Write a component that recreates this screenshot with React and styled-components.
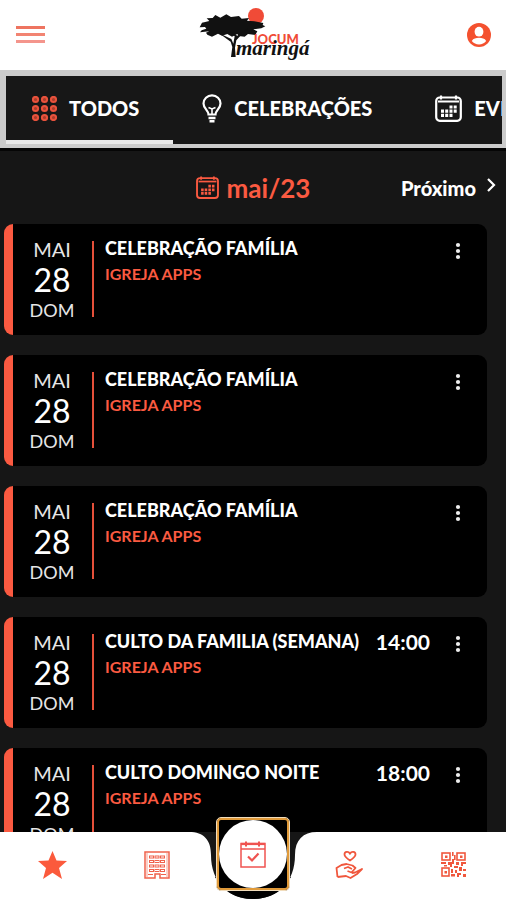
import React from 'react';
import styled, { createGlobalStyle } from 'styled-components';

const ACCENT = '#fb5a41';

const GlobalStyle = createGlobalStyle`
  * { box-sizing: border-box; }
  body { margin: 0; background: #161616; font-family: 'Lato', 'Open Sans', sans-serif; }
  button { margin: 0; padding: 0; border: 0; background: none; font: inherit; color: inherit; cursor: pointer; }
  svg { display: block; }
`;

const Screen = styled.div`
  display: flex;
  flex-direction: column;
  height: 100vh;
  overflow: hidden;
  background: #161616;
  color: #fff;
`;

const Header = styled.header`
  display: flex;
  align-items: center;
  justify-content: space-between;
  flex: none;
  height: 70px;
  padding: 0 15px;
  background: #fff;
  color: ${ACCENT};
`;

const TabBar = styled.div`
  display: flex;
  flex: none;
  gap: 3px;
  height: 78px;
  overflow: hidden;
  border: solid #cbcbcb;
  border-width: 6px 4px 4px 6px;
  background: #171717;
`;

const Tab = styled.button`
  display: flex;
  flex: none;
  align-items: center;
  gap: 12px;
  padding: 0 34px 0 26px;
  border-bottom: 4px solid ${(p) => (p.$active ? '#e8e8e8' : '#171717')};
  font-size: 20px;
  line-height: 24px;
  font-weight: 900;
`;

const TabIcon = styled.span`
  color: ${(p) => (p.$active ? '#e8523c' : '#fff')};
`;

const MonthBar = styled.div`
  display: grid;
  grid-template-columns: 1fr auto 1fr;
  align-items: center;
  flex: none;
  height: 76px;
  padding: 0 10px;
  border-top: 3px solid #050505;
`;

const Month = styled.h1`
  display: flex;
  align-items: center;
  gap: 8px;
  grid-column: 2;
  margin: 0;
  color: ${ACCENT};
  font-size: 26px;
  line-height: 32px;
  font-weight: 700;
`;

const NextButton = styled.button`
  display: flex;
  align-items: center;
  justify-self: end;
  gap: 10px;
  font-size: 20px;
  line-height: 24px;
  font-weight: 900;
`;

const EventList = styled.main`
  display: flex;
  flex: 1;
  flex-direction: column;
  gap: 20px;
  min-height: 0;
  overflow: hidden;
  padding: 0 19px 0 4px;
`;

const Card = styled.article`
  display: flex;
  flex: none;
  height: 111px;
  padding: 12px 24px 18px 9px;
  border-left: 9px solid ${ACCENT};
  border-radius: 9px;
  background: #000;
`;

const DateBox = styled.time`
  display: flex;
  flex: none;
  flex-direction: column;
  align-items: center;
  width: 60px;
  font-size: 20px;
  line-height: 26px;
  color: #e6e6e6;
`;

const Day = styled.strong`
  font-size: 32px;
  line-height: 36px;
  font-weight: 400;
  color: #fff;
`;

const Weekday = styled.span`
  font-size: 18px;
  line-height: 24px;
`;

const Divider = styled.span`
  flex: none;
  width: 2px;
  height: 76px;
  margin: 5px 11px 0 10px;
  background: #e5503a;
`;

const Details = styled.div`
  flex: 1;
  min-width: 0;
`;

const Title = styled.h2`
  margin: 0 0 2px;
  font-size: 18px;
  line-height: 24px;
  font-weight: 900;
  white-space: nowrap;
`;

const Place = styled.p`
  margin: 0;
  color: ${ACCENT};
  font-size: 16px;
  line-height: 24px;
  font-weight: 700;
`;

const Hour = styled.span`
  font-size: 21px;
  line-height: 26px;
  font-weight: 700;
`;

const MoreButton = styled.button`
  align-self: flex-start;
  width: 10px;
  margin: 6px 0 0 23px;
`;

const BottomNav = styled.nav`
  position: relative;
  display: flex;
  flex: none;
  height: 68px;
  color: ${ACCENT};
`;

const NavBackground = styled.div`
  position: absolute;
  inset: 0;
  display: grid;
  grid-template-columns: 1fr 128px 1fr;
`;

const Panel = styled.span`
  background: #fff;
`;

const NavItem = styled.button`
  position: relative;
  display: flex;
  flex: 1;
  align-items: center;
  justify-content: center;
  padding-bottom: 3px;
`;

const Agenda = styled.button`
  position: relative;
  flex: none;
  display: flex;
  width: 74px;
  height: 74px;
  margin: -15px 7px 0;
  border: 1px solid #f2ddbc;
  border-radius: 5px;
  background: #000;
  box-shadow: inset 0 0 0 2px #e09a3a;
`;

const Disc = styled.span`
  display: flex;
  align-items: center;
  justify-content: center;
  flex: 1;
  margin: 2px;
  border-radius: 50%;
  background: #fff;
`;

const Burger = () => (
  <svg width="30" height="20" viewBox="0 0 30 20">
    <rect x="1" y="1" width="29" height="3" fill="#ee7460" />
    <rect x="1" y="8" width="29" height="3" fill="#f28472" />
    <rect x="1" y="15" width="29" height="3" fill="#f4958c" />
  </svg>
);

const UserIcon = () => (
  <svg width="24" height="24" viewBox="0 0 24 24">
    <circle cx="12" cy="12" r="12" fill="#f4512f" />
    <ellipse cx="12" cy="8.700" rx="4.400" ry="4.900" fill="#fff" />
    <path d="M4.800 18c1.500-2.600 4.200-3.200 7.200-3.200s5.700.6 7.200 3.200c-1.800 2.300-4.300 3.500-7.200 3.500S6.600 20.300 4.800 18z" fill="#fff" />
  </svg>
);

const Logo = () => (
  <svg width="116" height="62" viewBox="0 0 116 62" role="img" aria-label="JOCUM maringá">
    <circle cx="58" cy="12" r="8" fill="#f04b37" />
    <g transform="translate(-7 -2) scale(.3333)" fill="#111">
      <path d="M33 62l22-5-8-8 18-1 8-9 15 8 18-10 14 8 24-3 8 8 22-2-6 8 22 2 27 5-2 6 8 4-12 6-24 3 12 6-6 11-22-3-10 8-18-2-4-6-16 8-14-8-16 5-12-6-18 9-14-6-4-6 10-4-28 3 5-6 14-5-4-5-16 1z" />
      <path d="M120 165l4-30-5-16-36-26 38 18 6 14 4-22-14-14 22 12 32-22-26 26-9 10-4 22 2 28z" />
    </g>
    <text x="54" y="40" fill="#f04b37" fontFamily="Lato, sans-serif" fontWeight="900" fontSize="13">JOCUM</text>
    <text x="38" y="51" fill="#111" fontFamily="Liberation Serif, serif" fontWeight="700" fontStyle="italic" fontSize="21">maringá</text>
  </svg>
);

const GridIcon = () => (
  <svg width="25" height="25" viewBox="0 0 25 25" fill="#a83d2c" stroke="currentColor" strokeWidth="2">
    {[3.5, 12.5, 21.5].map((y) => [3.5, 12.5, 21.5].map((x) => <circle key={`${x}-${y}`} cx={x} cy={y} r="2.600" />))}
  </svg>
);

const BulbIcon = () => (
  <svg width="20" height="29" viewBox="0 0 20 29" fill="none" stroke="currentColor" strokeWidth="2.200">
    <path d="M6.500 20.500c0-4-5-6-5-11a8.500 8.200 0 0 1 17 0C18.500 14.500 13.500 16.500 13.500 20.500z" />
    <path d="M6.500 13.500l3.500 1.500 3.500-1.500M10 15v6" strokeWidth="1.600" />
    <path d="M6.500 24h7M7.500 27.300h5" strokeWidth="2.600" />
  </svg>
);

const CalendarIcon = ({ size }) => (
  <svg width={size} height={size} viewBox="0 0 27 27" fill="none" stroke="currentColor" strokeWidth="2.200">
    <rect x="1.200" y="2.500" width="24.600" height="23.300" rx="3.500" />
    <path d="M3 6.500h21" strokeWidth="2" />
    <path d="M6 .5v4M21 .5v4" />
    <path d="M14.500 12h3M18.700 12h3M6 16.200h3M10.200 16.200h3M14.500 16.200h3M18.700 16.200h3M6 20.400h3M10.200 20.400h3M14.500 20.400h3" strokeWidth="3.200" />
  </svg>
);

const Chevron = () => (
  <svg width="10" height="22" viewBox="0 0 10 22" fill="none" stroke="currentColor" strokeWidth="2.200">
    <path d="M2 2l6 6-6 6" />
  </svg>
);

const Dots = () => (
  <svg width="10" height="18" viewBox="0 0 10 18" fill="#eee">
    <circle cx="5" cy="3" r="2.100" />
    <circle cx="5" cy="9" r="2.100" />
    <circle cx="5" cy="15" r="2.100" />
  </svg>
);

const StarIcon = () => (
  <svg width="29" height="28" viewBox="0 0 29 28">
    <path d="M14.500 0l4 9.500L29 10l-8 7 3 11-9.500-6.200L5 28l3-11-8-7 10.500-.5z" fill="#fb5a3c" />
  </svg>
);

const BuildingIcon = () => (
  <svg width="26" height="28" viewBox="0 0 26 28" fill="none" stroke="#f0614b">
    <path d="M1 1h24v26h-9v-4h-5v4H1z" strokeWidth="1.500" />
    <path d="M3 2v24M23 2v24" strokeWidth=".6" />
    {[5, 9.5, 14, 18.500].map((y) => [5.5, 11, 16.500].map((x) => <rect key={`${x}-${y}`} x={x} y={y} width="4" height="2" />))}
    <path d="M4 23.500h5M17 23.500h5" />
  </svg>
);

const AgendaIcon = () => (
  <svg width="26" height="27" viewBox="0 0 26 27" fill="none" stroke="#ef5350" strokeWidth="1.500">
    <rect x="1" y="2.500" width="24" height="23.500" />
    <path d="M1 8h24" />
    <path d="M1 3h24" strokeWidth="2.200" />
    <path d="M6 .5v5M19 .5v5" strokeWidth="2" />
    <path d="M8 15.500l4 4 6.500-7" strokeWidth="2.200" />
  </svg>
);

const GivingIcon = () => (
  <svg width="28" height="28" viewBox="0 0 28 28" fill="none" stroke="#f0573d" strokeWidth="1.800" strokeLinejoin="round">
    <path d="M15 9.500C11.500 7.200 9.500 5.500 9.500 3.500c0-3 4-3.500 5.500-.7 1.500-2.800 5.500-2.300 5.500.7 0 2-2 3.700-5.500 6z" />
    <path d="M2.500 26L1.500 17l5-3 5-1 6 1.500 3 2.500-4 4.500-4-1.500" />
    <path d="M9 17.500l4-1.500 4 2M17 22l3-.5 7-3.500-5 5-6.500 4-4.500-2-8.500 1" />
  </svg>
);

const QrIcon = () => (
  <svg width="25" height="25" viewBox="0 0 25 25" fill="#f0573d">
    <g fill="none" stroke="#f0573d" strokeWidth="1.600">
      <rect x="1" y="1" width="8" height="7" />
      <rect x="16" y="1" width="8" height="7" />
      <rect x="1" y="16" width="7" height="8" />
    </g>
    <path d="M4 3.500h2.500v2.500H4zM19 3.500h2.500v2.500H19zM3.500 19H6v2.500H3.500zM11 0h1.600v4H11zM13 3h1.600v5H13zM11 7h2v3h-2zM0 10h5v2H0zM7 10h6v2h-2v3H9v-2H7zM3 13h3v1.500H3zM15 10h3v3h-3zM20 10h5v2h-3v2h-2zM13 14h4v2h-4zM10 17h2v4h-2zM14 18h2v3h-2zM18 15h3v4h-3zM22 17h3v2h-3zM10 22h4v2.500h-4zM16 21h4v2h-2v2h-2zM22 22h3v3h-3z" />
  </svg>
);

const Notch = () => (
  <svg width="128" height="68" viewBox="0 0 128 68">
    <path d="M0 0C15 0 22 8 22 23C22 50 39 67 64 67S106 50 106 23C106 8 114 0 128 0V68H0z" fill="#fff" />
    <path d="M26 45C34 59 47 67 64 67S94 59 102 45z" fill="#000" />
  </svg>
);

const tabs = [
  { label: 'TODOS', icon: <GridIcon />, active: true },
  { label: 'CELEBRAÇÕES', icon: <BulbIcon /> },
  { label: 'EVENTOS', icon: <CalendarIcon size={27} /> },
];

const events = [
  { title: 'CELEBRAÇÃO FAMÍLIA' },
  { title: 'CELEBRAÇÃO FAMÍLIA' },
  { title: 'CELEBRAÇÃO FAMÍLIA' },
  { title: 'CULTO DA FAMILIA (SEMANA)', hour: '14:00' },
  { title: 'CULTO DOMINGO NOITE', hour: '18:00' },
];

const EventCard = ({ title, hour }) => (
  <Card>
    <DateBox dateTime="2023-05-28">
      <span>MAI</span>
      <Day>28</Day>
      <Weekday>DOM</Weekday>
    </DateBox>
    <Divider />
    <Details>
      <Title>{title}</Title>
      <Place>IGREJA APPS</Place>
    </Details>
    {hour && <Hour>{hour}</Hour>}
    <MoreButton aria-label="Mais opções"><Dots /></MoreButton>
  </Card>
);

export default function App() {
  return (
    <Screen>
      <GlobalStyle />
      <Header>
        <button aria-label="Menu"><Burger /></button>
        <Logo />
        <button aria-label="Perfil"><UserIcon /></button>
      </Header>
      <TabBar role="tablist">
        {tabs.map((t) => (
          <Tab key={t.label} role="tab" aria-selected={!!t.active} $active={t.active}>
            <TabIcon $active={t.active}>{t.icon}</TabIcon>
            {t.label}
          </Tab>
        ))}
      </TabBar>
      <MonthBar>
        <Month><CalendarIcon size={23} />mai/23</Month>
        <NextButton>Próximo<Chevron /></NextButton>
      </MonthBar>
      <EventList>
        {events.map((e, i) => <EventCard key={i} {...e} />)}
      </EventList>
      <BottomNav>
        <NavBackground><Panel /><Notch /><Panel /></NavBackground>
        <NavItem aria-label="Início"><StarIcon /></NavItem>
        <NavItem aria-label="Igreja"><BuildingIcon /></NavItem>
        <Agenda aria-label="Agenda"><Disc><AgendaIcon /></Disc></Agenda>
        <NavItem aria-label="Contribuir"><GivingIcon /></NavItem>
        <NavItem aria-label="QR Code"><QrIcon /></NavItem>
      </BottomNav>
    </Screen>
  );
}
